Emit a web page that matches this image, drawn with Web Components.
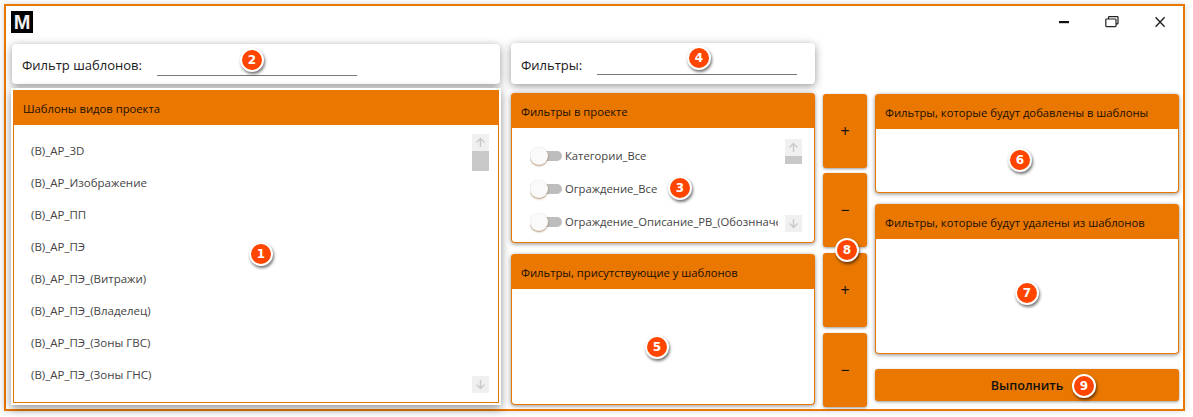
<!DOCTYPE html>
<html lang="ru"><head><meta charset="utf-8"><title>Шаблоны</title>
<style>
html,body{margin:0;padding:0;background:#fff;height:417px;overflow:hidden}
body{font-family:"Open Sans","Noto Sans","Liberation Sans",sans-serif;color:#111}
.col{display:flex;flex-direction:column;position:relative;flex:none}
</style></head><body>
<template id="t-window"><style>
:host{display:flex;flex-direction:column;box-sizing:border-box;width:1181px;height:407px;margin:4px;border:2px solid #e97700;background:#fff;box-shadow:0 0 6px rgba(0,0,0,.18);position:relative}
.main{display:flex;padding:0 0 0 6px;margin-top:5px}
</style><slot name="bar"></slot><div class="main"><slot></slot></div></template>

<template id="t-bar"><style>
:host{display:flex;align-items:center;height:32px;padding:0 0 0 5px;box-sizing:border-box}
.logo{width:22px;height:22px;background:#000;color:#f2f2f2;font:700 20px/22px "Liberation Sans",sans-serif;text-align:center;overflow:hidden}
.btns{margin-left:auto;display:flex;gap:2px}
.b{width:46px;height:22px;display:flex;align-items:center;justify-content:center}
svg{display:block}
</style><div class="logo">M</div><div class="btns">
<div class="b"><svg width="12" height="12" viewBox="0 0 12 12"><rect x="1" y="5" width="10" height="2.2" fill="#111"/></svg></div>
<div class="b"><svg width="14" height="12" viewBox="0 0 14 12" fill="none" stroke="#222" stroke-width="1.2"><path d="M3.5 3V1.2a.6.6 0 0 1 .6-.6h8.3a.6.6 0 0 1 .6.6v6a.6.6 0 0 1-.6.6H11"/><rect x=".8" y="3" width="10.2" height="7.6" rx=".8"/></svg></div>
<div class="b"><svg width="12" height="12" viewBox="0 0 12 12" stroke="#222" stroke-width="1.4"><path d="M1.6 1.2l9 9.6M10.6 1.2l-9 9.6"/></svg></div>
</div></template>

<template id="t-search"><style>
:host{display:flex;align-items:center;position:relative;box-sizing:border-box;background:#fff;border-radius:4px;box-shadow:0 2px 8px rgba(0,0,0,.42);font-size:13px;color:#1a1a1a;padding-left:10px}
.l{flex:0 0 var(--label,135px);white-space:nowrap;margin-top:2px}
.i{width:200px;height:1px;background:#777;margin-top:22px}
</style><span class="l"><slot></slot></span><div class="i"></div></template>

<template id="t-panel"><style>
:host{display:flex;flex-direction:column;position:relative;box-sizing:border-box;background:#fff;border:1px solid #e97700;border-top:0;border-radius:var(--r,4px);box-shadow:var(--sh,0 1px 4px rgba(0,0,0,.45))}
.h{flex:0 0 35px;box-sizing:border-box;background:#e97700;border-radius:var(--r,4px) var(--r,4px) 0 0;margin:0 -1px;display:flex;align-items:center;padding:2px 0 0 10px;font-size:11.25px;color:#1a0f00;white-space:nowrap}
.c{flex:1;position:relative;min-height:0;overflow:hidden}
</style><div class="h"><slot name="title"></slot></div><div class="c"><slot></slot></div></template>

<template id="t-action"><style>
:host{display:flex;align-items:center;justify-content:center;position:relative;box-sizing:border-box;background:#e97700;border-radius:3px;box-shadow:0 1px 3px rgba(0,0,0,.4);font-size:var(--fs,16px);font-weight:var(--fw,400);color:#111}
</style><slot></slot></template>

<template id="t-badge"><style>
:host{position:absolute;box-sizing:border-box;width:24px;height:24px;border-radius:50%;background:#ff4500;border:2px solid #fff;box-shadow:1px 2px 3px rgba(0,0,0,.55);color:#fff;font:700 12px/20px "DejaVu Sans",sans-serif;text-align:center;z-index:5}
</style><slot></slot></template>

<template id="t-scroll"><style>
:host{position:absolute;width:17px;display:flex;flex-direction:column}
.a{height:17px;background:#f0f0f0;display:flex;align-items:center;justify-content:center;flex:none}
.t{background:#c8c8c8;height:var(--thumb,20px);flex:none}
.s{flex:1}
svg{display:block}
</style><div class="a"><svg width="11" height="11" viewBox="0 0 11 11" fill="none" stroke="#c9c9c9" stroke-width="1.4"><path d="M5.5 10V1.5M1.5 5.5l4-4 4 4"/></svg></div><div class="t"></div><div class="s"></div><div class="a"><svg width="11" height="11" viewBox="0 0 11 11" fill="none" stroke="#c9c9c9" stroke-width="1.4"><path d="M5.5 1v8.5M1.5 5.5l4 4 4-4"/></svg></div></template>

<template id="t-list"><style>
:host{display:flex;flex-direction:column;font-size:11.5px;color:#444;padding:10px 0 0 17px;box-sizing:border-box}
::slotted(div){height:32px;line-height:32px;white-space:nowrap}
</style><slot></slot></template>

<template id="t-toggle"><style>
:host{display:flex;align-items:center;height:33px;font-size:11.25px;color:#444;white-space:nowrap;width:248px;overflow:hidden}
.sw{flex:none;position:relative;width:30px;height:10px;background:#bdbdbd;border-radius:5px;margin:0 3px 0 2px}
.th{position:absolute;left:-2px;top:-4px;width:18px;height:18px;border-radius:50%;background:#fafafa;box-shadow:0 1px 2px rgba(120,70,20,.6)}
</style><div class="sw"><div class="th"></div></div><slot></slot></template>

<m-window>
<m-bar slot="bar"></m-bar>

<div class="col" style="width:488px">
 <m-search style="height:40px;margin-top:1px;--label:135px">Фильтр шаблонов:<m-badge style="left:228px;top:4px">2</m-badge></m-search>
 <m-panel style="height:313px;margin:6px 1px 0;--r:0px;--sh:0 0 0 2px #fff,0 3px 9px 2px rgba(0,0,0,.45)">
  <span slot="title">Шаблоны видов проекта</span>
  <m-list><div>(В)_АР_3D</div><div>(В)_АР_Изображение</div><div>(В)_АР_ПП</div><div>(В)_АР_ПЭ</div><div>(В)_АР_ПЭ_(Витражи)</div><div>(В)_АР_ПЭ_(Владелец)</div><div>(В)_АР_ПЭ_(Зоны ГВС)</div><div>(В)_АР_ПЭ_(Зоны ГНС)</div></m-list>
  <m-scroll style="left:458px;top:9px;height:259px;--thumb:20px"></m-scroll>
  <m-badge style="left:235px;top:117px">1</m-badge>
 </m-panel>
</div>

<div class="col" style="width:304px;margin-left:11px">
 <m-search style="height:41px;--label:76px">Фильтры:<m-badge style="left:176px;top:3px">4</m-badge></m-search>
 <m-panel style="height:150px;margin-top:9px">
  <span slot="title">Фильтры в проекте</span>
  <div class="col" style="padding:11px 0 0 18px">
   <m-toggle>Категории_Все</m-toggle><m-toggle>Ограждение_Все</m-toggle><m-toggle>Ограждение_Описание_РВ_(Обознначение)</m-toggle>
  </div>
  <m-scroll style="left:273px;top:11px;height:93px;--thumb:8px"></m-scroll>
  <m-badge style="left:156px;top:48px">3</m-badge>
 </m-panel>
 <m-panel style="height:151px;margin-top:11px">
  <span slot="title">Фильтры, присутствующие у шаблонов</span>
  <m-badge style="left:133px;top:46px">5</m-badge>
 </m-panel>
</div>

<div class="col" style="width:44px;margin-left:8px;padding-top:51px">
 <m-action style="height:74px">+</m-action>
 <m-action style="height:74px;margin-top:5px">−</m-action>
 <m-action style="height:74px;margin-top:6px">+</m-action>
 <m-action style="height:74px;margin-top:6px">−</m-action>
 <m-badge style="left:12px;top:195px">8</m-badge>
</div>

<div class="col" style="width:304px;margin-left:8px;padding-top:51px">
 <m-panel style="height:99px">
  <span slot="title">Фильтры, которые будут добавлены в шаблоны</span>
  <m-badge style="left:132px;top:19px">6</m-badge>
 </m-panel>
 <m-panel style="height:150px;margin-top:11px">
  <span slot="title">Фильтры, которые будут удалены из шаблонов</span>
  <m-badge style="left:139px;top:42px">7</m-badge>
 </m-panel>
 <m-action style="height:32px;margin-top:15px;--fs:12.6px;--fw:600">Выполнить<m-badge style="left:197px;top:5px">9</m-badge></m-action>
</div>
</m-window>

<script>
[['m-window','t-window'],['m-bar','t-bar'],['m-search','t-search'],['m-panel','t-panel'],['m-action','t-action'],['m-badge','t-badge'],['m-scroll','t-scroll'],['m-list','t-list'],['m-toggle','t-toggle']].forEach(function(p){
 customElements.define(p[0],class extends HTMLElement{constructor(){super();this.attachShadow({mode:'open'}).appendChild(document.getElementById(p[1]).content.cloneNode(true));}});
});
</script>
</body></html>
